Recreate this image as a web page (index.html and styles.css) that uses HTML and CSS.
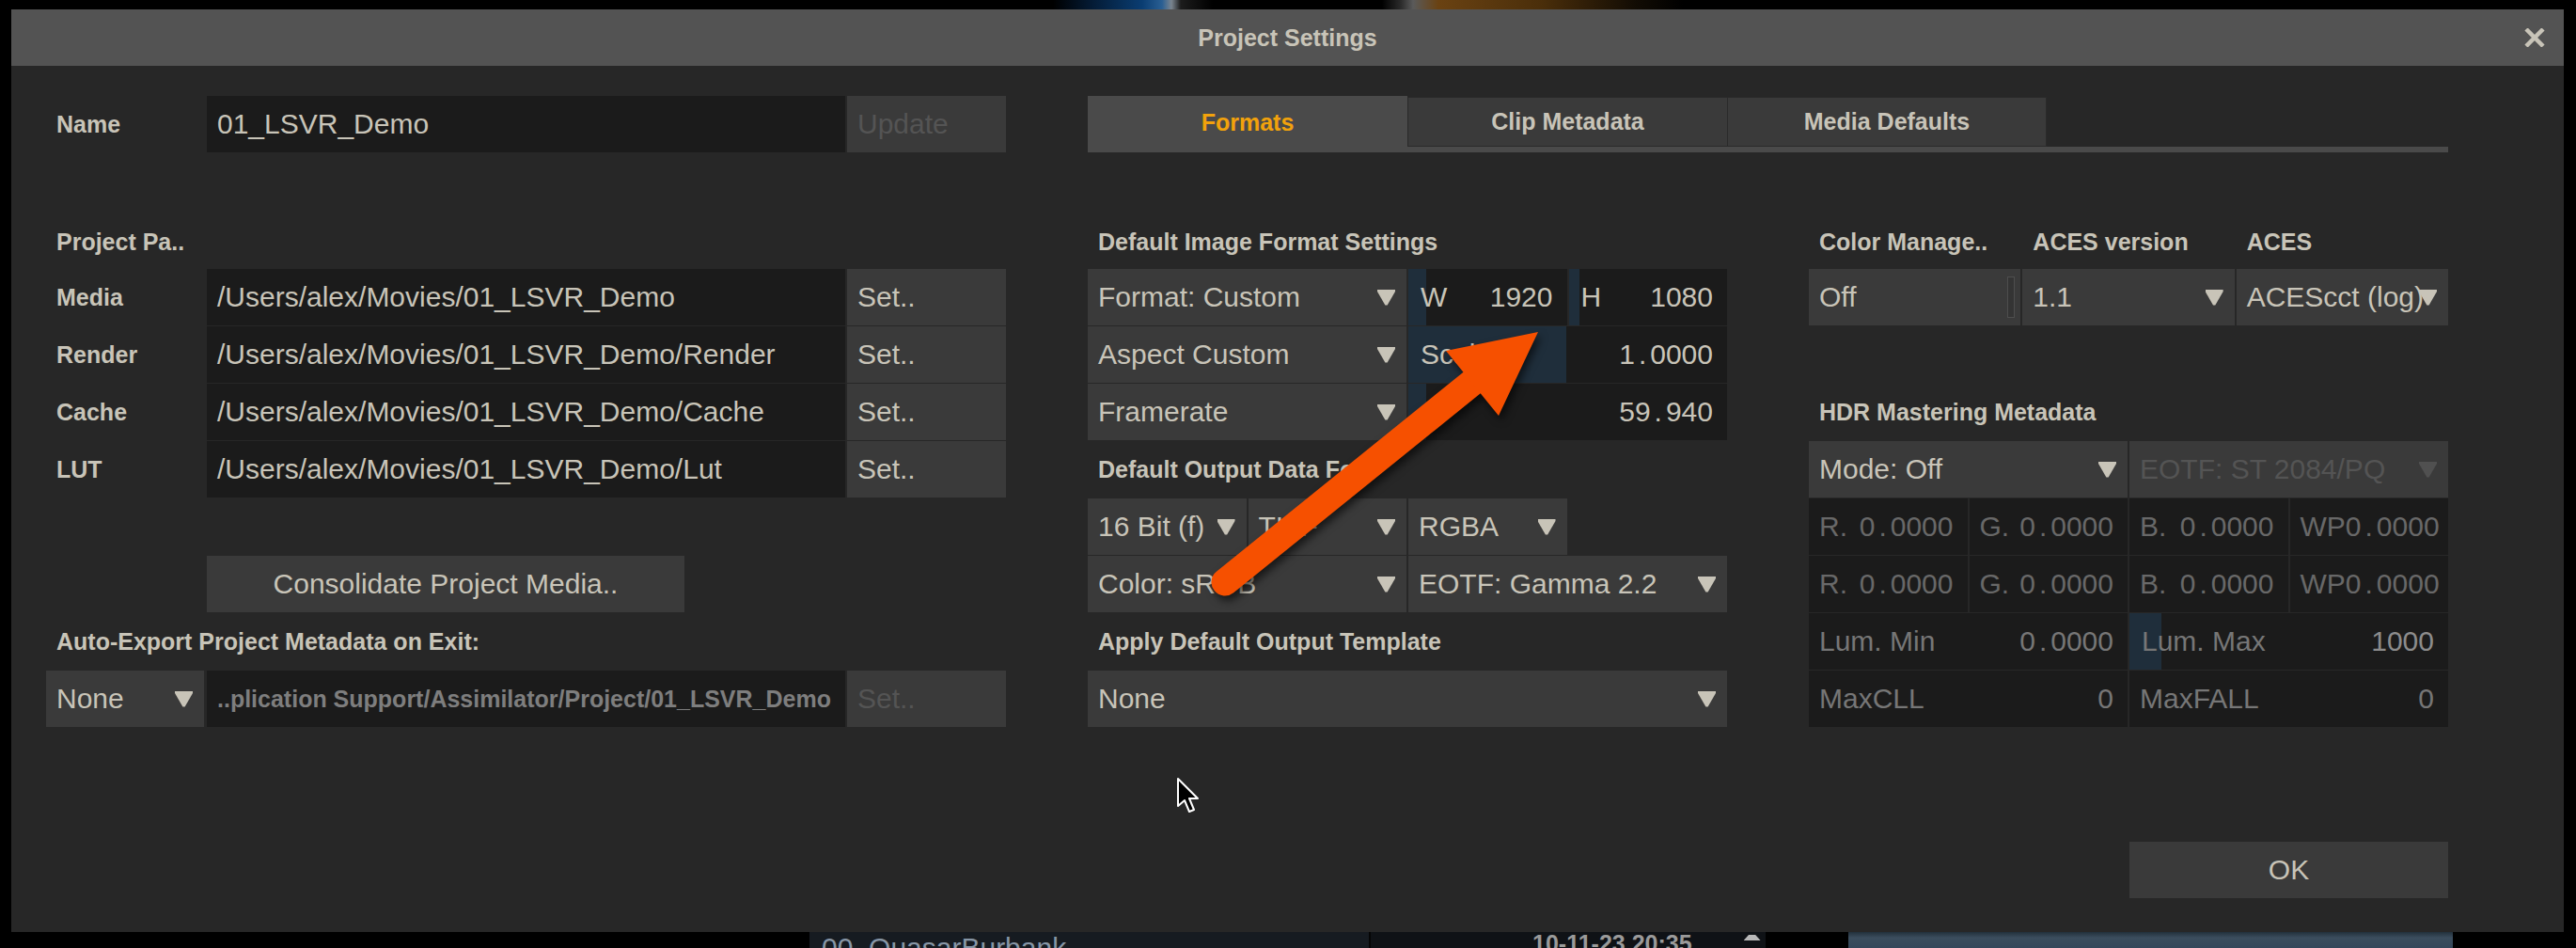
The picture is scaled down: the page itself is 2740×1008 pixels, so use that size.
FILE: index.html
```html
<!DOCTYPE html>
<html lang="en">
<head>
<meta charset="utf-8">
<title>Project Settings</title>
<link rel="stylesheet" href="styles.css">
</head>
<body>
<div class="backdrop-top"></div>
<div class="stage">
  <section class="dialog">
    <header class="titlebar">
      <span></span>
      <h1 class="title">Project Settings</h1>
      <svg class="close" width="22" height="20" viewBox="0 0 22 20"><path d="M2 1 L20 19 M20 1 L2 19" stroke="#c8c4b8" stroke-width="4.5"/></svg>
    </header>
    <div class="content">
      <div class="lgrid name-row">
        <div class="lbl">Name</div>
        <div class="cell input">01_LSVR_Demo</div>
        <div class="cell btn set disabled">Update</div>
      </div>
      <nav class="tabs">
        <div class="tabrow">
          <div class="tab active">Formats</div>
          <div class="tab">Clip Metadata</div>
          <div class="tab">Media Defaults</div>
        </div>
        <div class="tabbar"></div>
      </nav>

      <div class="col col-left">
        <div class="sec first">Project Pa..</div>
        <div class="lgrid">
          <div class="lbl">Media</div><div class="cell input">/Users/alex/Movies/01_LSVR_Demo</div><div class="cell btn set">Set..</div>
          <div class="lbl">Render</div><div class="cell input">/Users/alex/Movies/01_LSVR_Demo/Render</div><div class="cell btn set">Set..</div>
          <div class="lbl">Cache</div><div class="cell input">/Users/alex/Movies/01_LSVR_Demo/Cache</div><div class="cell btn set">Set..</div>
          <div class="lbl">LUT</div><div class="cell input">/Users/alex/Movies/01_LSVR_Demo/Lut</div><div class="cell btn set">Set..</div>
        </div>
        <div class="cell btn center consolidate">Consolidate Project Media..</div>
        <div class="sec">Auto-Export Project Metadata on Exit:</div>
        <div class="lgrid">
          <div class="cell dd autodd"><span class="t">None</span></div>
          <div class="cell input pathdim">..plication Support/Assimilator/Project/01_LSVR_Demo</div>
          <div class="cell btn set disabled">Set..</div>
        </div>
      </div>

      <div class="col col-mid">
        <div class="sec first">Default Image Format Settings</div>
        <div class="quad">
          <div class="cell dd s2"><span class="t">Format: Custom</span></div>
          <div class="cell input slider" style="--fill:19px"><span>W</span><span>1920</span></div>
          <div class="cell input slider" style="--fill:11px"><span>H</span><span>1080</span></div>
          <div class="cell dd s2"><span class="t">Aspect Custom</span></div>
          <div class="cell input slider s2" style="--fill:168px"><span>Scale</span><span>1<span class="dot">.</span>0000</span></div>
          <div class="cell dd s2"><span class="t">Framerate</span></div>
          <div class="cell input slider s2" style="--fill:19px"><span></span><span>59<span class="dot">.</span>940</span></div>
        </div>
        <div class="sec">Default Output Data Fo..</div>
        <div class="quad">
          <div class="cell dd"><span class="t">16 Bit (f)</span></div>
          <div class="cell dd"><span class="t">TIFF</span></div>
          <div class="cell dd"><span class="t">RGBA</span></div>
          <div class="blank"></div>
          <div class="cell dd s2"><span class="t">Color: sRGB</span></div>
          <div class="cell dd s2"><span class="t">EOTF: Gamma 2.2</span></div>
        </div>
        <div class="sec">Apply Default Output Template</div>
        <div class="quad">
          <div class="cell dd s4"><span class="t">None</span></div>
        </div>
      </div>

      <div class="col col-right">
        <div class="tri heads">
          <div class="sec">Color Manage..</div>
          <div class="sec">ACES version</div>
          <div class="sec">ACES</div>
        </div>
        <div class="tri">
          <div class="cell btn off"><span class="t">Off</span><span class="knob"></span></div>
          <div class="cell dd"><span class="t">1.1</span></div>
          <div class="cell dd"><span class="t">ACEScct (log)</span></div>
        </div>
        <div class="sec hdr">HDR Mastering Metadata</div>
        <div class="quad">
          <div class="cell dd s2"><span class="t">Mode: Off</span></div>
          <div class="cell dd s2 disabled"><span class="t">EOTF: ST 2084/PQ</span></div>
          <div class="cell input pair dim"><span>R.</span><span>0<span class="dot">.</span>0000</span></div>
          <div class="cell input pair dim"><span>G.</span><span>0<span class="dot">.</span>0000</span></div>
          <div class="cell input pair dim"><span>B.</span><span>0<span class="dot">.</span>0000</span></div>
          <div class="cell input pair dim"><span>WP</span><span>0<span class="dot">.</span>0000</span></div>
          <div class="cell input pair dim"><span>R.</span><span>0<span class="dot">.</span>0000</span></div>
          <div class="cell input pair dim"><span>G.</span><span>0<span class="dot">.</span>0000</span></div>
          <div class="cell input pair dim"><span>B.</span><span>0<span class="dot">.</span>0000</span></div>
          <div class="cell input pair dim"><span>WP</span><span>0<span class="dot">.</span>0000</span></div>
          <div class="cell input pair mid s2"><span>Lum. Min</span><span>0<span class="dot">.</span>0000</span></div>
          <div class="cell input slider mid s2" style="--fill:34px"><span>Lum. Max</span><span class="bright">1000</span></div>
          <div class="cell input pair mid s2"><span>MaxCLL</span><span>0</span></div>
          <div class="cell input pair mid s2"><span>MaxFALL</span><span>0</span></div>
        </div>
        <div class="cell btn center ok">OK</div>
      </div>
    </div>
  </section>
</div>
<div class="backdrop-bottom">
  <div class="bb-left"></div>
  <div class="bb-panel">00_QuasarBurbank</div>
  <div class="bb-panel2"><span class="bb-date">10-11-23 20:35</span><span class="bb-icon"></span></div>
  <div class="bb-gap"></div>
  <div class="bb-thumb"></div>
</div>

<svg class="annot" width="2740" height="1008" viewBox="0 0 2740 1008">
  <g class="arrow">
    <line x1="1303" y1="619" x2="1578" y2="397" stroke="#f65000" stroke-width="29" stroke-linecap="round"/>
    <polygon points="1636,353 1538,373 1594,442" fill="#f65000"/>
  </g>
</svg>
<svg class="cursor" width="26" height="40" viewBox="0 0 26 40">
  <path d="M2 2 L2 31 L9 25 L14 37 L19 35 L14 23 L23 23 Z" fill="#000" stroke="#fff" stroke-width="2" stroke-linejoin="round"/>
</svg>
</body>
</html>
```

FILE: styles.css
```css
* { box-sizing: border-box; margin: 0; padding: 0; }
html, body { width: 2740px; height: 1008px; overflow: hidden; }
body {
  background: #000;
  font-family: "Liberation Sans", Arial, sans-serif;
  color: #c8c4b8;
  display: flex;
  flex-direction: column;
  position: relative;
}

/* backdrop around the modal */
.backdrop-top {
  height: 10px;
  flex: none;
  background: linear-gradient(90deg, #000 1120px, #041a33 1160px, #0a3d72 1215px, #2a5f93 1236px, #7a858f 1246px, #1c1c1c 1256px, #000 1290px, #000 1470px, #2b2b2b 1490px, #5a5a5a 1503px, #6a4212 1530px, #4a2e0a 1640px, #120c04 1740px, #000 1790px);
}
.stage { height: 981px; flex: none; padding-left: 12px; }
.backdrop-bottom { height: 17px; flex: none; display: flex; overflow: hidden; }
.bb-left { width: 861px; flex: none; }
.bb-panel {
  width: 595px; flex: none; background: #161b21;
  padding: 2px 0 0 13px; font-size: 30px; line-height: 30px; color: #8796a6; white-space: nowrap;
}
.bb-panel2 {
  width: 422px; flex: none; background: #0f1216; border-left: 2px solid #050505;
  display: flex; padding-left: 172px;
}
.bb-date { font-size: 25px; font-weight: 700; line-height: 25px; color: #9a9a9a; white-space: nowrap; }
.bb-icon { width: 18px; height: 6px; margin: 3px 0 0 55px; background: #b8b8b8; clip-path: polygon(30% 0, 70% 0, 100% 100%, 0 100%); }
.bb-gap { width: 88px; flex: none; }
.bb-thumb { width: 643px; flex: none; background: linear-gradient(180deg, #22303b 0, #3b4d5d 6px, #34475a 100%); }

/* dialog */
.dialog { width: 2715px; height: 981px; background: #272727; display: flex; flex-direction: column; }
.titlebar {
  height: 60px; flex: none; background: #535353;
  display: grid; grid-template-columns: 1fr auto 1fr; align-items: center;
}
.title { font-size: 25px; font-weight: 700; color: #c8c4b8; }
.close { justify-self: end; margin-right: 20px; }

.content {
  display: grid;
  grid-template-columns: 1021px 680px 680px;
  grid-template-rows: 60px auto;
  column-gap: 87px;
  padding: 32px 0 0 37px;
  align-items: start;
}

/* tabs */
.tabs { grid-column: 2 / span 2; height: 60px; display: flex; flex-direction: column; }
.tabrow { height: 54px; display: flex; }
.tab {
  width: 340px; height: 53px; margin-top: 1px;
  background: #3a3a3a; border: 1px solid #2a2a2a; border-right: none;
  display: flex; align-items: center; justify-content: center;
  font-size: 25px; font-weight: 700; color: #c8c4b8;
}
.tab:last-child { border-right: 1px solid #2a2a2a; }
.tab.active { height: 54px; margin-top: 0; border: none; background: #4a4a4a; color: #f2a20c; padding-top: 2px; }
.tabbar { height: 6px; background: #4a4a4a; }

/* columns */
.col { display: flex; flex-direction: column; }
.col-left, .col-mid, .col-right { grid-row: 2; }

.sec {
  height: 62px; display: flex; align-items: center; padding-left: 11px;
  font-size: 25px; font-weight: 700; white-space: nowrap;
}
.sec.first { height: 58px; margin-top: 66px; }
.heads { margin-top: 66px; }
.heads .sec { height: 58px; }
.sec.hdr { margin-top: 61px; }

.lgrid { display: grid; grid-template-columns: 171px 679px 171px; grid-auto-rows: 60px; row-gap: 1px; }
.lbl { display: flex; align-items: center; padding-left: 11px; font-size: 25px; font-weight: 700; }
.set { margin-left: 2px; }
.autodd { margin-right: 3px; }

.quad { display: grid; grid-template-columns: repeat(4, 1fr); grid-auto-rows: 60px; gap: 1px 2px; }
.tri { display: grid; grid-template-columns: repeat(3, 1fr); gap: 1px 2px; }
.s2 { grid-column: span 2; }
.s4 { grid-column: span 4; }

/* cells */
.cell {
  height: 60px; display: flex; align-items: center;
  padding: 0 15px 0 11px; font-size: 30px; white-space: nowrap; overflow: hidden;
  color: #c8c4b8;
}
.input { background: #1b1b1b; }
.btn, .dd { background: #3a3a3a; }
.center { justify-content: center; padding: 0; }
.disabled { color: #545454; }

.dd { padding-right: 12px; }
.dd .t { flex: 1 1 0; min-width: 0; }
.dd::after {
  content: ""; flex: none; width: 19px; height: 17px; background: #c8c4b8;
  clip-path: polygon(0 0, 100% 0, 100% 14%, 56% 100%, 44% 100%, 0 14%);
}
.dd.disabled::after { background: #505050; }

.slider {
  justify-content: space-between; padding-left: 13px;
  background: linear-gradient(90deg, #1f2e3b var(--fill), #1b1b1b var(--fill));
}
.pair { justify-content: space-between; }
.dot { margin: 0 4px; }
.dim { color: #686868; }
.mid { color: #767676; }
.bright { color: #8c8c8c; }
.pathdim { font-size: 25px; font-weight: 700; color: #7e7e7e; }

.off { padding-right: 6px; }
.off .t { flex: 1; }
.knob { width: 8px; height: 44px; border: 1px solid #4e4e4e; background: #343434; }

.consolidate { align-self: flex-start; width: 508px; margin: 62px 0 0 171px; }
.ok { align-self: flex-end; width: 339px; margin-top: 122px; }

/* overlays: annotation arrow and mouse pointer */
.annot { position: absolute; left: 0; top: 0; pointer-events: none; }
.arrow { filter: drop-shadow(3px 5px 4px rgba(0, 0, 0, 0.6)); }
.cursor { position: absolute; left: 1251px; top: 826px; pointer-events: none; }
```
